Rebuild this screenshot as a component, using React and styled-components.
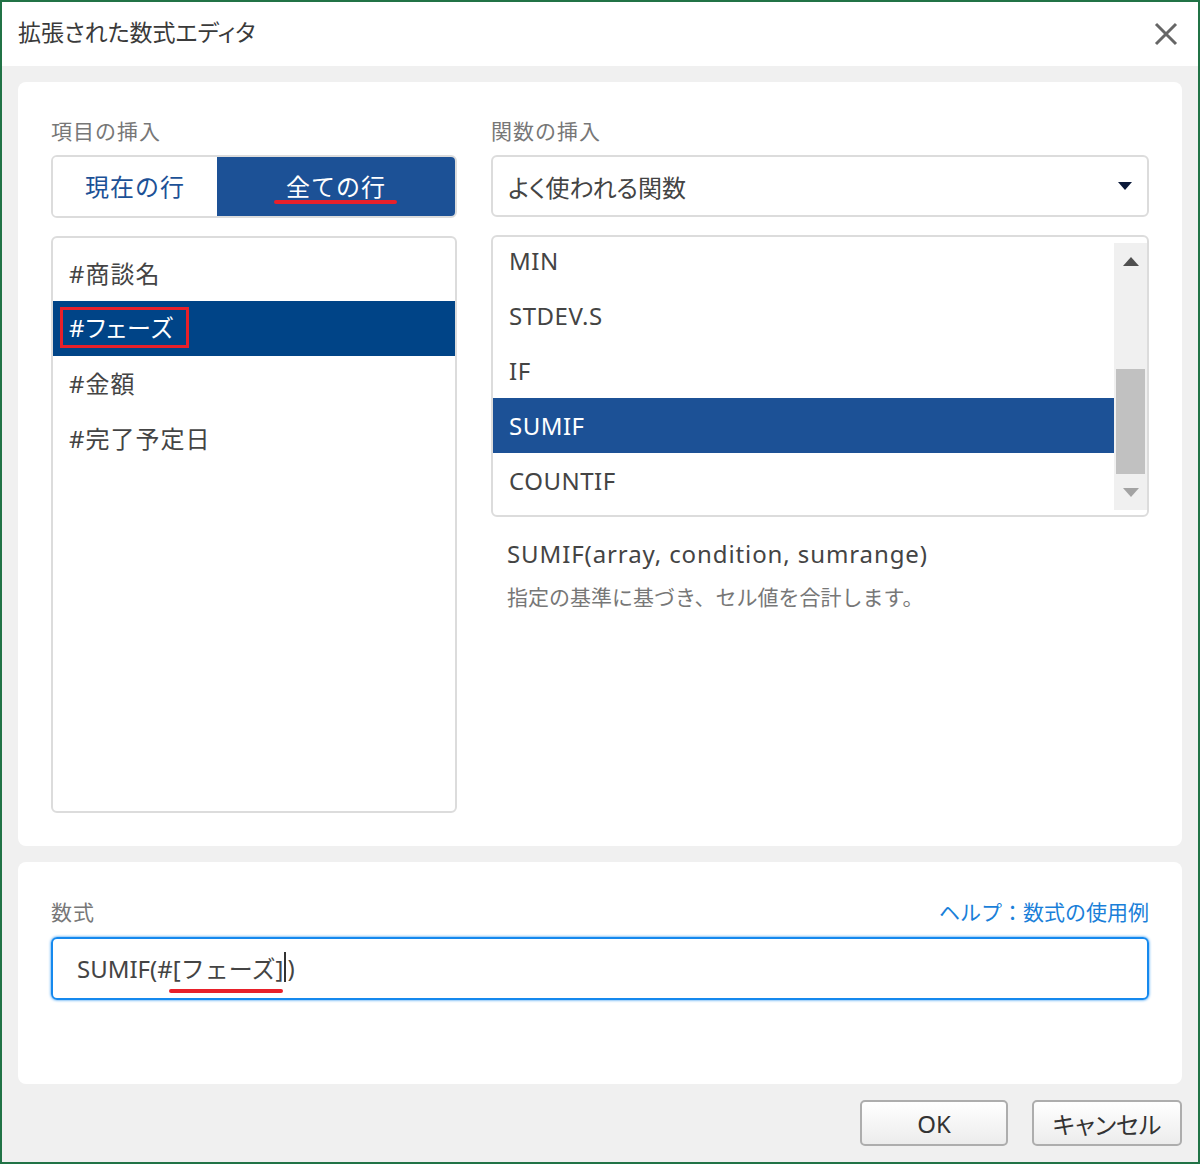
import React from "react";
import styled, { createGlobalStyle } from "styled-components";

const GlobalStyle = createGlobalStyle`
  html, body {
    margin: 0;
    padding: 0;
    background: #ffffff;
  }
  body {
    font-family: "Noto Sans", "Noto Sans CJK JP", sans-serif;
    color: #333;
  }
  * {
    box-sizing: border-box;
  }
`;

const Window = styled.div`
  width: 1200px;
  height: 1164px;
  border: 2px solid #217346;
  background: #f0f0f0;
  display: flex;
  flex-direction: column;
`;

const Header = styled.div`
  height: 64px;
  background: #fff;
  display: flex;
  align-items: center;
  justify-content: space-between;
  padding: 0 18px 6px 16px;
`;

const Title = styled.h1`
  margin: 0;
  font-size: 23px;
  font-weight: 400;
  color: #3a3a3a;
  font-feature-settings: "palt";
`;

const CloseButton = styled.button`
  border: none;
  background: none;
  padding: 0;
  width: 28px;
  height: 28px;
  display: flex;
  align-items: center;
  justify-content: center;
  margin-top: 6px;
  cursor: pointer;
`;

const Body = styled.div`
  flex: 1;
  display: flex;
  flex-direction: column;
  padding: 16px 16px 0;
  gap: 16px;
`;

const Card = styled.div`
  background: #fff;
  border-radius: 8px;
  padding: ${(p) => p.$padding};
`;

const Columns = styled.div`
  display: grid;
  grid-template-columns: 406px 658px;
  column-gap: 34px;
`;

const Column = styled.div`
  display: flex;
  flex-direction: column;
`;

const Label = styled.div`
  font-size: 21px;
  line-height: 26px;
  color: #777;
  letter-spacing: 1px;
  margin-bottom: ${(p) => (p.$flush ? 0 : 11)}px;
`;

const Toggle = styled.div`
  display: flex;
  height: 63px;
  border: 2px solid #dcdcdc;
  border-radius: 6px;
  overflow: hidden;
  margin-bottom: 18px;
`;

const ToggleItem = styled.div`
  flex: ${(p) => p.$flex};
  display: flex;
  align-items: center;
  justify-content: center;
  padding-bottom: 3px;
  font-size: 24px;
  color: ${(p) => (p.$active ? "#fff" : "#1c5196")};
  background: ${(p) => (p.$active ? "#1c5196" : "#fff")};
  letter-spacing: 1px;
  position: relative;
`;

const RedUnderline = styled.span`
  position: absolute;
  height: 4px;
  border-radius: 2px;
  background: #e8202a;
  left: ${(p) => p.$left}px;
  width: ${(p) => p.$width}px;
  top: ${(p) => p.$top}px;
`;

const ListBox = styled.div`
  border: 2px solid #dcdcdc;
  border-radius: 6px;
  height: ${(p) => p.$height}px;
  overflow: hidden;
  position: relative;
  padding-top: ${(p) => p.$padTop || 0}px;
`;

const ListItem = styled.div`
  height: 55px;
  display: flex;
  align-items: center;
  padding-left: 16px;
  font-size: 24px;
  letter-spacing: 0.5px;
  color: ${(p) => (p.$selected ? "#fff" : "#444")};
  background: ${(p) => (p.$selected ? p.$selColor : "transparent")};
`;

const FieldItem = styled(ListItem)`
  font-feature-settings: "palt";
  letter-spacing: 1px;
  padding-bottom: 3px;
`;

const Boxed = styled.span`
  border: 3px solid #e8202a;
  margin-left: -9px;
  padding: 1px 12px 1px 6px;
  line-height: 33px;
`;

const Select = styled.div`
  height: 62px;
  border: 2px solid #dcdcdc;
  border-radius: 6px;
  display: flex;
  align-items: center;
  justify-content: space-between;
  padding: 0 14px 0 15px;
  font-size: 24px;
  color: #444;
  margin-bottom: 18px;
  font-feature-settings: "palt";
`;

const FuncInner = styled.div`
  display: flex;
`;

const FuncItems = styled.div`
  flex: 1;
  margin-top: -4px;
`;

const Scrollbar = styled.div`
  width: 33px;
  margin: 6px 0 7px;
  background: #f0f0f0;
  display: flex;
  flex-direction: column;
  align-items: center;
  padding: 0 2px;
`;

const ScrollArrow = styled.div`
  height: 36px;
  width: 100%;
  display: flex;
  align-items: center;
  justify-content: center;
`;

const ScrollTrack = styled.div`
  flex: 1;
  width: 100%;
  display: flex;
  flex-direction: column;
  padding-top: 90px;
`;

const ScrollThumb = styled.div`
  height: 105px;
  background: #c1c1c1;
`;

const Signature = styled.div`
  margin-top: 20px;
  padding-left: 16px;
  font-size: 24px;
  letter-spacing: 0.9px;
  color: #444;
  line-height: 34px;
`;

const Description = styled.div`
  padding-left: 16px;
  font-size: 21px;
  color: #777;
  line-height: 30px;
  margin-top: 11px;
`;

const FormulaHead = styled.div`
  display: flex;
  justify-content: space-between;
  align-items: flex-end;
  margin-bottom: 12px;
`;

const HelpLink = styled.a`
  font-size: 21px;
  color: #1a7fd9;
  text-decoration: none;
  line-height: 26px;
`;

const FormulaInput = styled.div`
  height: 63px;
  border: 2px solid #1589ee;
  box-shadow: 0 0 3px #1589ee;
  border-radius: 6px;
  display: flex;
  align-items: center;
  padding: 0 0 3px 24px;
  font-size: 24px;
  color: #444;
  position: relative;
`;

const Caret = styled.span`
  display: inline-block;
  width: 2px;
  height: 30px;
  background: #333;
  vertical-align: middle;
  margin: 0 1px;
`;

const Footer = styled.div`
  display: flex;
  justify-content: flex-end;
  gap: 24px;
`;

const Button = styled.button`
  width: ${(p) => p.$width}px;
  height: 46px;
  border: 2px solid #adadad;
  border-radius: 5px;
  background: linear-gradient(#ffffff, #ececec);
  font-family: "Noto Sans", "Noto Sans CJK JP", sans-serif;
  font-size: 24px;
  font-feature-settings: "palt";
  color: #333;
  cursor: pointer;
`;

const leftItems = ["#商談名", "#フェーズ", "#金額", "#完了予定日"];
const funcs = ["MIN", "STDEV.S", "IF", "SUMIF", "COUNTIF"];

export default function App() {
  return (
    <>
      <GlobalStyle />
      <Window>
        <Header>
          <Title>拡張された数式エディタ</Title>
          <CloseButton aria-label="close">
            <svg width="24" height="24" viewBox="0 0 24 24">
              <path d="M2 2 L22 22 M22 2 L2 22" stroke="#666" strokeWidth="3" />
            </svg>
          </CloseButton>
        </Header>
        <Body>
          <Card $padding="36px 33px 33px">
            <Columns>
              <Column>
                <Label>項目の挿入</Label>
                <Toggle>
                  <ToggleItem $flex="0 0 164px">現在の行</ToggleItem>
                  <ToggleItem $flex="1" $active>
                    全ての行
                    <RedUnderline $left={57} $width={123} $top={43} />
                  </ToggleItem>
                </Toggle>
                <ListBox $height={577} $padTop={8}>
                  {leftItems.map((t, i) =>
                    i === 1 ? (
                      <FieldItem key={t} $selected $selColor="#004487">
                        <Boxed>{t}</Boxed>
                      </FieldItem>
                    ) : (
                      <FieldItem key={t}>{t}</FieldItem>
                    )
                  )}
                </ListBox>
              </Column>
              <Column>
                <Label>関数の挿入</Label>
                <Select>
                  よく使われる関数
                  <svg width="16" height="10" viewBox="0 0 16 10">
                    <path d="M1 1 L15 1 L8 9 Z" fill="#0b1a3a" />
                  </svg>
                </Select>
                <ListBox $height={282}>
                  <FuncInner>
                    <FuncItems>
                      {funcs.map((f) => (
                        <ListItem key={f} $selected={f === "SUMIF"} $selColor="#1c5196">
                          {f}
                        </ListItem>
                      ))}
                    </FuncItems>
                    <Scrollbar>
                      <ScrollArrow>
                        <svg width="16" height="9" viewBox="0 0 16 9">
                          <path d="M0 9 L16 9 L8 0 Z" fill="#505050" />
                        </svg>
                      </ScrollArrow>
                      <ScrollTrack>
                        <ScrollThumb />
                      </ScrollTrack>
                      <ScrollArrow>
                        <svg width="16" height="9" viewBox="0 0 16 9">
                          <path d="M0 0 L16 0 L8 9 Z" fill="#a3a3a3" />
                        </svg>
                      </ScrollArrow>
                    </Scrollbar>
                  </FuncInner>
                </ListBox>
                <Signature>SUMIF(array, condition, sumrange)</Signature>
                <Description>指定の基準に基づき、セル値を合計します。</Description>
              </Column>
            </Columns>
          </Card>
          <Card $padding="37px 33px 84px">
            <FormulaHead>
              <Label $flush>数式</Label>
              <HelpLink href="#">ヘルプ：数式の使用例</HelpLink>
            </FormulaHead>
            <FormulaInput>
              SUMIF(#[フェーズ]
              <Caret />)
              <RedUnderline $left={116} $width={114} $top={50} />
            </FormulaInput>
          </Card>
          <Footer>
            <Button $width={148}>OK</Button>
            <Button $width={150}>キャンセル</Button>
          </Footer>
        </Body>
      </Window>
    </>
  );
}
